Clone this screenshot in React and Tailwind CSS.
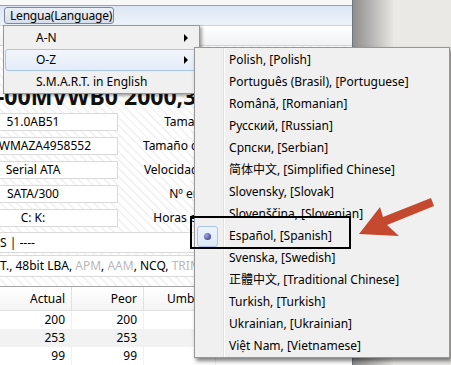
const FONT = "font-['Noto_Sans','Noto_Sans_CJK_SC','Noto_Sans_CJK_TC',sans-serif]";

const LANGS = [
  "Polish, [Polish]",
  "Português (Brasil), [Portuguese]",
  "Română, [Romanian]",
  "Русский, [Russian]",
  "Српски, [Serbian]",
  "简体中文, [Simplified Chinese]",
  "Slovensky, [Slovak]",
  "Slovenščina, [Slovenian]",
  "Español, [Spanish]",
  "Svenska, [Swedish]",
  "正體中文, [Traditional Chinese]",
  "Turkish, [Turkish]",
  "Ukrainian, [Ukrainian]",
  "Việt Nam, [Vietnamese]",
];

// value, label, label column width (labels are right aligned)
const INFO = [
  ["51.0AB51", "Tamaño búfer", "w-[125px]"],
  ["WD-WMAZA4958552", "Tamaño caché NV", "w-[125px]"],
  ["Serial ATA", "Velocidad rotación", "w-[130px]"],
  ["SATA/300", "Nº encendidos", "w-[133px]"],
  ["C: K:", "Horas encendido", "w-[131px]"],
];

const ROWS = [
  ["200", "200", ""],
  ["253", "253", ""],
  ["99", "99", ""],
];

function Arrow() {
  return (
    <span className="w-0 h-0 border-y-[4px] border-y-transparent border-l-[4px] border-l-black" />
  );
}

function MenuItem({ label, arrow, active }) {
  return (
    <div
      className={`h-[22px] flex items-center justify-between rounded-[3px] border ${
        active
          ? "border-[#a9c5e8] bg-gradient-to-b from-[#f2f6fb] to-[#e3ecf8]"
          : "border-transparent"
      }`}
    >
      <span className="pl-[30px] whitespace-nowrap">{label}</span>
      {arrow && <span className="mr-[8px] flex"><Arrow /></span>}
    </div>
  );
}

export default function App() {
  return (
    <div className={`relative w-[451px] h-[365px] overflow-hidden bg-[#eae9e5] text-[12px] text-black ${FONT}`}>
      <div className="flex h-full">

        {/* WINDOW */}
        <div className="w-[353px] h-full flex flex-col border-r border-[#6f7680] bg-white">
          <div className="h-[5px] bg-[#f8f8f8]" />

          {/* MENU BAR */}
          <div className="h-[20px] border-t border-[#97a2b1] bg-gradient-to-b from-[#dce6f4] to-[#eef3fa] pl-[4px] pt-[1px]">
            <div className="w-[110px] h-[17px] rounded-[3px] border border-[#7d8898] bg-gradient-to-b from-[#eaeff6] to-[#d6dfeb] pl-[5px] leading-[15px] whitespace-nowrap tracking-[-0.2px]">
              Lengua(Language)
            </div>
          </div>

          {/* TOOLBAR */}
          <div className="h-[21px] border-t border-[#c8d1dc] border-b border-b-[#d5d5d5] bg-gradient-to-b from-white to-[#f1f2f4]" />

          {/* INFO */}
          <div className="flex flex-col pt-[34px] pb-[9px] bg-[repeating-linear-gradient(45deg,#ffffff_0px,#ffffff_4px,#f4f4f4_4px,#f4f4f4_6px)]">
            <div className="h-[32px] leading-[32px] text-[23px] font-bold whitespace-nowrap ml-[-3px] text-[#111]">
              -00MVWB0 2000,3 GB
            </div>

            <div className="mt-[1px] flex flex-col gap-[6px]">
              {INFO.map(([value, label, w]) => (
                <div key={label} className="flex items-center h-[18px]">
                  <div className="ml-[-52px] w-[170px] shrink-0 h-[18px] border border-[#dadada] bg-white flex justify-center leading-[16px] whitespace-nowrap overflow-hidden">
                    <span className="shrink-0">{value}</span>
                  </div>
                  <div className={`${w} shrink-0 text-right whitespace-nowrap`}>{label}</div>
                </div>
              ))}
            </div>

            <div className="mt-[5px] h-[21px] ml-[-4px] mr-[4px] border border-[#dadada] bg-white pl-[3px] leading-[19px] whitespace-nowrap">
              S | ----
            </div>
            <div className="mt-[2px] h-[22px] ml-[-4px] mr-[4px] border border-[#dadada] bg-white pl-[3px] leading-[20px] whitespace-nowrap">
              T., 48bit LBA, <span className="text-[#b9b9b9]">APM</span>, <span className="text-[#b9b9b9]">AAM</span>, NCQ, <span className="text-[#b9b9b9]">TRIM</span>
            </div>
          </div>

          {/* TABLE */}
          <div className="flex-1 border-t border-[#a5a5a5] bg-white">
            <div className="h-[24px] flex border-b border-[#e3e3e3] bg-gradient-to-b from-white to-[#f4f4f4]">
              {["Actual", "Peor", "Umbral"].map((h) => (
                <div key={h} className="w-[72px] shrink-0 border-r border-[#e1e1e1] text-right pr-[6px] leading-[24px]">
                  {h}
                </div>
              ))}
            </div>
            {ROWS.map((r, i) => (
              <div key={i} className={`h-[18px] flex ${i % 2 === 1 ? "bg-[#f2f2f2]" : "bg-white"}`}>
                {r.map((c, j) => (
                  <div key={j} className="w-[72px] shrink-0 border-r border-[#f0f0f0] text-right pr-[6px] leading-[18px]">
                    {c}
                  </div>
                ))}
              </div>
            ))}
          </div>
        </div>

        {/* DESKTOP */}
        <div className="flex-1 flex">
          <div className="w-[40px] bg-gradient-to-r from-[#8f8f8f] to-[#e6e5e1]" />
          <div className="flex-1 bg-[#eae9e5]" />
        </div>
      </div>

      {/* MENU A-N / O-Z */}
      <div className="absolute left-[3px] top-[25px] w-[197px] h-[69px] border border-[#979797] bg-[#f0f0f0] pt-[1px] pl-[1px] pr-[2px] shadow-[2px_2px_3px_rgba(0,0,0,0.35)]">
        <MenuItem label="A-N" arrow />
        <MenuItem label="O-Z" arrow active />
        <MenuItem label="S.M.A.R.T. in English" />
      </div>

      {/* SUBMENU */}
      <div className="absolute left-[194px] top-[47px] w-[256px] h-[311px] border border-[#979797] bg-[#f0f0f0] pt-[1px] px-[2px] shadow-[2px_3px_4px_rgba(0,0,0,0.5)]">
        <div className="absolute left-[28px] top-0 bottom-0 w-[2px] border-l border-l-[#e0e0e0] border-r border-r-white" />
        {LANGS.map((l) => (
          <div key={l} className="relative h-[22px] flex items-center whitespace-nowrap">
            <div className="w-[21px] h-[21px] shrink-0 flex items-center justify-center">
              {l.startsWith("Español") && (
                <div className="w-[21px] h-[21px] rounded-[3px] border border-[#a9c5e8] bg-gradient-to-b from-[#eef3fb] to-[#dde8f7] flex items-center justify-center">
                  <div className="w-[7px] h-[7px] rounded-full bg-[radial-gradient(circle_at_35%_35%,#a4a4e0,#2c2c78)]" />
                </div>
              )}
            </div>
            <span className="ml-[11px]">{l}</span>
          </div>
        ))}
      </div>

      {/* ANNOTATION */}
      <div className="absolute left-[190px] top-[216px] w-[161px] h-[33px] border-2 border-black" />
      <svg className="absolute inset-0 pointer-events-none" width="451" height="365" viewBox="0 0 451 365">
        <polygon
          points="359,234 380,207 383,217 431,198 434,206 387,225 399,236"
          fill="#c4492f"
        />
      </svg>
    </div>
  );
}
